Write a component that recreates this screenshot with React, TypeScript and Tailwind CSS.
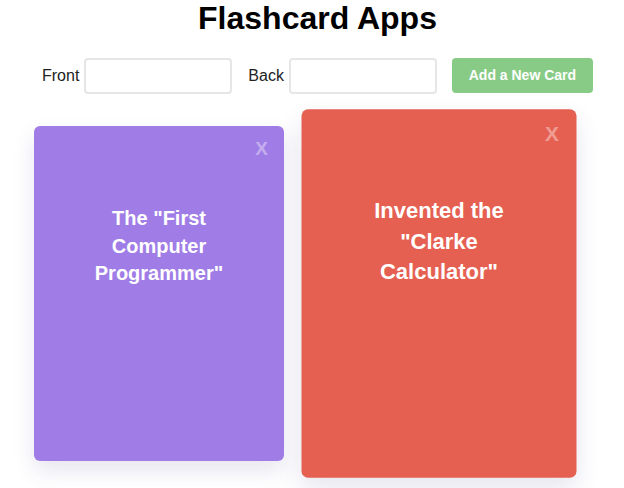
type Card = {
  id: number;
  text: string;
  color: string;
  active?: boolean;
};

const cards: Card[] = [
  { id: 1, text: 'The "First Computer Programmer"', color: "bg-[#a07de6]" },
  { id: 2, text: 'Invented the "Clarke Calculator"', color: "bg-[#e66052]", active: true },
];

function Flashcard({ card }: { card: Card }) {
  return (
    <div
      className={`relative h-[335px] w-[250px] shrink-0 rounded-[6px] px-[50px] pt-[79px] text-center shadow-[0_10px_22px_rgba(60,40,120,0.12)] ${card.color} ${
        card.active ? "scale-110" : ""
      }`}
    >
      <button className="absolute right-[16px] top-[11px] text-[19px] font-bold leading-[23px] text-white/40">
        X
      </button>
      <p className="text-[20px] font-bold leading-[27.5px] text-white">{card.text}</p>
    </div>
  );
}

export default function App() {
  return (
    <div className="min-h-[488px] bg-white font-['Liberation_Sans',Arial,sans-serif] text-[#111]">
      <h1 className="pl-[11px] text-center text-[32px] font-bold leading-[37px] text-black">Flashcard Apps</h1>

      <form className="mt-[21px] flex items-center pl-[42px]">
        <label className="mr-[5px] text-[16px] text-[#222]">Front</label>
        <input className="h-[36px] w-[148px] rounded-[4px] border-2 border-[#e6e6e6] bg-white px-2 outline-none" />
        <label className="ml-[16px] mr-[5px] text-[16px] text-[#222]">Back</label>
        <input className="h-[36px] w-[148px] rounded-[4px] border-2 border-[#e6e6e6] bg-white px-2 outline-none" />
        <button
          type="button"
          className="ml-[15px] h-[35px] w-[141px] -translate-y-[1px] rounded-[4px] bg-[#88cb86] text-[14px] font-bold text-white"
        >
          Add a New Card
        </button>
      </form>

      <div className="mt-[32px] flex gap-[30px] pl-[34px]">
        {cards.map((card) => (
          <Flashcard key={card.id} card={card} />
        ))}
      </div>
    </div>
  );
}
